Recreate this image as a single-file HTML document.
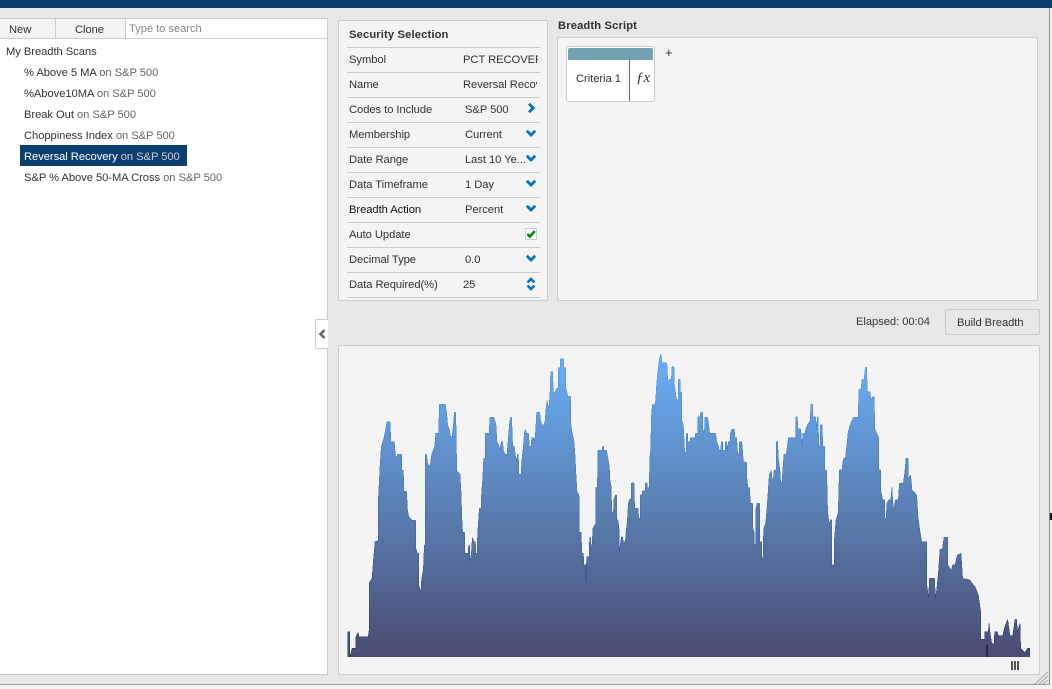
<!DOCTYPE html>
<html><head><meta charset="utf-8"><style>
*{box-sizing:border-box}
html,body{margin:0;padding:0}
body{width:1052px;height:689px;overflow:hidden;position:relative;background:#e8e8e8;font:11.2px "Liberation Sans",sans-serif;color:#333;letter-spacing:-.05px}
.a{position:absolute}
.t{position:absolute;white-space:nowrap;line-height:14px;margin-top:1px}
.t span{color:#666}
.b{font-weight:bold;letter-spacing:.14px}
.l{position:absolute;left:347px;width:193px;height:1px;background:#ccc}
.v{position:absolute;white-space:nowrap;overflow:hidden;line-height:14px;margin-top:1px}
svg.c{position:absolute;left:526px;width:10px;height:10px}
svg.c path{fill:none;stroke:#0a73b8;stroke-width:2.8}
</style></head><body>
<div class="a" style="left:0;top:0;width:1052px;height:8px;background:#0a3f70"></div>
<div class="a" style="left:1049px;top:8px;width:1px;height:677px;background:#888"></div>
<div class="a" style="left:1050px;top:8px;width:2px;height:681px;background:#f4f4f4"></div>
<div class="a" style="left:0;top:684px;width:1050px;height:1px;background:#999"></div>
<div class="a" style="left:0;top:685px;width:1052px;height:4px;background:#f4f4f4"></div>
<div class="a" style="left:1050px;top:513px;width:2px;height:7px;background:#113"></div>

<!-- left panel -->
<div class="a" style="left:0;top:18px;width:328px;height:657px;background:#fff;border:1px solid #ccc;border-left:0"></div>
<div class="a" style="left:0;top:19px;width:55px;height:20px;background:#f4f4f4;border-bottom:1px solid #ccc"></div>
<div class="a" style="left:55px;top:19px;width:71px;height:20px;background:#f4f4f4;border:1px solid #ccc;border-top:0"></div>
<div class="a" style="left:126px;top:38px;width:201px;height:1px;background:#ccc"></div>
<div class="t" style="left:9px;top:22px">New</div>
<div class="t" style="left:75px;top:22px">Clone</div>
<div class="t" style="left:129px;top:21px;color:#8a8a8a">Type to search</div>
<div class="t" style="left:6px;top:44px">My Breadth Scans</div>
<div class="t" style="left:24px;top:65px">% Above 5 MA <span>on S&amp;P 500</span></div>
<div class="t" style="left:24px;top:86px">%Above10MA <span>on S&amp;P 500</span></div>
<div class="t" style="left:24px;top:107px">Break Out <span>on S&amp;P 500</span></div>
<div class="t" style="left:24px;top:128px">Choppiness Index <span>on S&amp;P 500</span></div>
<div class="a" style="left:20px;top:145px;width:167px;height:21px;background:#0a3f70"></div>
<div class="t" style="left:24px;top:149px;color:#fff">Reversal Recovery <span style="color:#ccd">on S&amp;P 500</span></div>
<div class="t" style="left:24px;top:170px">S&amp;P % Above 50-MA Cross <span>on S&amp;P 500</span></div>

<!-- collapse handle -->
<div class="a" style="left:315px;top:319px;width:13px;height:30px;background:#fff;border:1px solid #ccc;border-right:0;border-radius:2px 0 0 2px"></div>
<svg class="a" style="left:318px;top:329px" width="8" height="10" viewBox="0 0 8 10"><path d="M6.5 1 2.5 5l4 4" fill="none" stroke="#666" stroke-width="2.6"/></svg>

<!-- security selection -->
<div class="a" style="left:338px;top:20px;width:210px;height:281px;background:#f4f4f4;border:1px solid #ccc;border-radius:2px"></div>
<div class="t b" style="left:349px;top:27px">Security Selection</div>
<div class="l" style="top:47px"></div><div class="l" style="top:72px"></div><div class="l" style="top:97px"></div><div class="l" style="top:122px"></div><div class="l" style="top:147px"></div><div class="l" style="top:172px"></div><div class="l" style="top:197px"></div><div class="l" style="top:222px"></div><div class="l" style="top:247px"></div><div class="l" style="top:272px"></div><div class="l" style="top:297px"></div>
<div class="t" style="left:349px;top:52px">Symbol</div>
<div class="t" style="left:349px;top:77px">Name</div>
<div class="t" style="left:349px;top:102px">Codes to Include</div>
<div class="t" style="left:349px;top:127px">Membership</div>
<div class="t" style="left:349px;top:152px">Date Range</div>
<div class="t" style="left:349px;top:177px">Data Timeframe</div>
<div class="t" style="left:349px;top:202px;color:#111">Breadth Action</div>
<div class="t" style="left:349px;top:227px">Auto Update</div>
<div class="t" style="left:349px;top:252px">Decimal Type</div>
<div class="t" style="left:349px;top:277px">Data Required(%)</div>
<div class="v" style="left:463px;top:52px;width:75px">PCT RECOVERY</div>
<div class="v" style="left:463px;top:77px;width:74px">Reversal Recovery</div>
<div class="t" style="left:465px;top:102px">S&amp;P 500</div>
<div class="t" style="left:465px;top:127px">Current</div>
<div class="t" style="left:465px;top:152px">Last 10 Ye...</div>
<div class="t" style="left:465px;top:177px">1 Day</div>
<div class="t" style="left:465px;top:202px">Percent</div>
<div class="t" style="left:465px;top:252px">0.0</div>
<div class="t" style="left:463px;top:277px">25</div>
<svg class="c" style="top:103px" viewBox="0 0 10 10"><path d="M3 .8 7.2 5 3 9.2"/></svg>
<svg class="c" style="top:128px" viewBox="0 0 10 10"><path d="M.8 2.8 5 7 9.2 2.8"/></svg>
<svg class="c" style="top:153px" viewBox="0 0 10 10"><path d="M.8 2.8 5 7 9.2 2.8"/></svg>
<svg class="c" style="top:178px" viewBox="0 0 10 10"><path d="M.8 2.8 5 7 9.2 2.8"/></svg>
<svg class="c" style="top:203px" viewBox="0 0 10 10"><path d="M.8 2.8 5 7 9.2 2.8"/></svg>
<svg class="c" style="top:253px" viewBox="0 0 10 10"><path d="M.8 2.8 5 7 9.2 2.8"/></svg>
<svg class="a" style="left:526px;top:277px" width="10" height="14" viewBox="0 0 10 14"><path d="M1.5 5.5 5 2l3.5 3.5M1.5 8.5 5 12l3.5-3.5" fill="none" stroke="#0a73b8" stroke-width="2.6"/></svg>
<svg class="a" style="left:525px;top:228px" width="12" height="12" viewBox="0 0 12 12"><rect x=".5" y=".5" width="11" height="11" fill="#fff" stroke="#ccc"/><path d="M2.3 6l2.6 2.6L9.8 3" fill="none" stroke="#0a8a12" stroke-width="2.6"/></svg>

<!-- breadth script -->
<div class="t b" style="left:558px;top:18px">Breadth Script</div>
<div class="a" style="left:557px;top:37px;width:481px;height:264px;background:#f4f4f4;border:1px solid #ccc;border-radius:2px"></div>
<div class="a" style="left:566px;top:46px;width:89px;height:56px;background:#fff;border:1px solid #ccc;border-radius:3px"></div>
<div class="a" style="left:568px;top:48px;width:85px;height:12px;background:#74a2b3;border-radius:2px 2px 0 0"></div>
<div class="a" style="left:629px;top:60px;width:1px;height:41px;background:#666"></div>
<div class="t" style="left:576px;top:71px">Criteria 1</div>
<div class="t" style="left:636px;top:69px;font:italic 15px 'Liberation Serif',serif;line-height:16px;letter-spacing:0">&#402;x</div>
<div class="t" style="left:665px;top:45px;font-size:13px">+</div>

<!-- elapsed + button -->
<div class="t" style="left:856px;top:314px">Elapsed: 00:04</div>
<div class="a" style="left:945px;top:309px;width:95px;height:26px;background:#e8e8e8;border:1px solid #ccc;border-radius:2px"></div>
<div class="t" style="left:957px;top:315px">Build Breadth</div>

<!-- chart panel -->
<div class="a" style="left:338px;top:345px;width:702px;height:330px;background:#f4f4f4;border:1px solid #ccc;border-radius:2px"></div>
<svg class="a" style="left:0;top:0" width="1052" height="689" viewBox="0 0 1052 689" shape-rendering="crispEdges">
<defs>
<linearGradient id="f1" gradientUnits="userSpaceOnUse" x1="0" y1="30" x2="0" y2="936"><stop offset="0" stop-color="#6ab0f8"/><stop offset=".5" stop-color="#5a80b4"/><stop offset="1" stop-color="#4a4c72"/></linearGradient>
<linearGradient id="s1" gradientUnits="userSpaceOnUse" x1="0" y1="30" x2="0" y2="936"><stop offset="0" stop-color="#4a94e8"/><stop offset=".5" stop-color="#3a6cb0"/><stop offset="1" stop-color="#25306a"/></linearGradient>
<linearGradient id="f2" gradientUnits="userSpaceOnUse" x1="0" y1="165" x2="0" y2="1071"><stop offset="0" stop-color="#6ab0f8"/><stop offset=".5" stop-color="#5a80b4"/><stop offset="1" stop-color="#4a4c72"/></linearGradient>
<linearGradient id="s2" gradientUnits="userSpaceOnUse" x1="0" y1="165" x2="0" y2="1071"><stop offset="0" stop-color="#4a94e8"/><stop offset=".5" stop-color="#3a6cb0"/><stop offset="1" stop-color="#25306a"/></linearGradient>
<clipPath id="c1"><rect x="340" y="345" width="260" height="312"/></clipPath>
<clipPath id="c2"><rect x="600" y="345" width="230" height="312"/></clipPath>
<clipPath id="c3"><rect x="830" y="345" width="201" height="312"/></clipPath>
</defs>
<g clip-path="url(#c1)"><g transform="translate(340,345) scale(.33333)">
<polygon fill="url(#f1)" stroke="url(#s1)" stroke-width="1.5" points="24,945 24,860 30,860 30,935 36,910 48,910 48,875 54,862 57,875 84,875 87,862 88,712 96,700 100,650 105,590 114,588 115,462 120,364 124,304 132,278 141,230 150,230 153,290 163,290 166,330 170,338 172,328 185,328 186,376 190,376 192,438 200,440 202,490 206,514 216,526 227,526 228,612 232,625 236,625 237,722 242,745 245,700 250,675 253,600 256,600 256,328 260,328 262,352 268,365 272,352 275,328 284,304 287,265 296,265 298,178 316,178 320,202 323,240 328,254 332,276 336,276 340,240 343,202 347,202 349,276 350,376 360,388 363,438 366,526 368,562 374,562 375,625 384,625 386,600 389,602 390,650 394,625 397,577 402,590 406,590 408,625 411,625 413,562 418,490 423,490 425,438 428,402 431,340 435,340 436,265 447,265 450,217 462,217 468,240 471,290 477,302 480,315 484,290 488,290 490,315 495,328 501,328 505,278 508,240 511,217 515,217 518,304 523,304 526,330 530,350 532,328 535,328 537,388 543,388 546,340 550,304 553,265 556,253 560,265 566,265 568,304 573,304 575,278 581,278 584,290 587,253 590,202 599,202 602,228 606,240 612,240 615,228 618,190 621,166 627,190 630,142 632,80 638,80 640,142 645,142 650,130 654,130 655,68 660,68 661,42 671,42 672,68 677,68 678,130 684,154 692,154 693,240 697,265 702,290 705,328 708,388 711,440 717,450 718,562 724,562 725,625 730,625 732,660 738,660 738,710 740,636 747,636 749,577 752,577 753,600 757,600 758,550 765,538 767,540 768,428 772,425 774,316 790,316 790,945"/>
</g></g>
<g clip-path="url(#c2)"><g transform="translate(590,345) scale(.33333)">
<polygon fill="url(#f1)" stroke="url(#s1)" stroke-width="1.5" points="20,945 20,316 36,316 38,304 42,304 42,316 50,316 54,340 58,364 60,404 64,428 65,502 70,502 72,462 76,450 80,450 81,525 84,525 88,560 88,620 92,590 94,576 98,576 100,590 106,590 108,562 112,526 115,474 120,462 123,462 124,414 132,414 134,490 144,490 146,514 150,525 151,450 156,450 157,438 165,438 166,414 171,414 172,428 178,428 179,340 182,316 184,216 187,178 192,178 194,190 197,165 199,130 202,92 205,70 208,42 211,30 214,30 216,54 229,54 232,66 233,110 238,103 244,103 246,66 252,66 253,115 256,140 260,165 264,165 265,103 270,103 271,142 275,142 276,228 280,240 284,320 288,325 289,265 293,265 294,290 300,290 301,278 315,278 316,265 323,265 324,216 330,216 332,202 338,202 339,253 343,265 345,217 353,217 356,240 359,265 377,265 380,290 385,304 388,316 392,316 394,290 398,290 399,316 405,316 406,290 410,290 412,316 415,290 420,290 421,265 425,253 433,253 435,278 440,278 443,326 447,326 448,290 455,290 457,304 460,350 470,352 471,402 474,428 479,428 481,475 488,475 489,550 492,560 493,598 497,598 498,490 501,475 509,475 510,590 515,590 516,645 519,635 521,550 526,538 529,514 532,475 535,428 538,388 544,376 546,402 550,402 552,376 558,376 559,290 563,290 565,340 570,376 572,412 576,412 579,366 582,328 588,328 592,304 595,278 617,278 618,216 622,216 624,252 632,252 636,300 639,265 645,265 647,253 652,240 660,228 663,178 668,178 669,216 677,216 680,252 682,216 685,216 686,312 690,300 691,240 697,240 698,304 704,304 705,376 710,376 713,500 716,525 720,535 730,535 730,945"/>
</g></g>
<g clip-path="url(#c3)"><g transform="translate(820,300) scale(.33333)">
<polygon fill="url(#f2)" stroke="url(#s2)" stroke-width="1.5" points="20,1080 20,660 35,660 36,795 42,795 43,720 48,660 54,640 56,590 58,510 66,510 70,475 76,475 80,440 84,400 90,375 100,352 115,352 116,270 123,265 126,238 132,238 136,202 140,202 142,276 150,276 153,300 158,290 163,290 164,385 170,400 176,412 177,510 182,510 183,575 188,600 194,600 195,655 199,655 200,610 206,600 212,600 216,562 218,600 221,630 226,600 235,600 238,550 250,550 255,510 258,475 264,475 265,535 272,525 276,570 290,585 294,650 300,695 305,725 320,725 321,860 326,895 328,835 344,835 346,895 350,870 355,820 360,748 367,748 372,712 383,712 384,795 394,810 398,795 405,795 412,765 423,760 428,835 450,840 455,848 465,860 475,885 482,935 483,1018 494,1018 494,996 505,996 507,970 510,996 515,1030 522,1032 524,996 532,996 535,1008 548,1008 553,985 563,958 570,1008 578,1008 585,958 590,958 592,996 600,970 602,1045 615,1058 622,1045 630,1045 630,1080"/>
</g></g>
<path d="M986 645h2v12h-2z" fill="#1d2a62"/>
<path d="M1011 661h2v9h-2zM1014 661h2v9h-2zM1017 661h2v9h-2z" fill="#555"/>
</svg>
<svg class="a" style="left:1034px;top:671px" width="15" height="14" viewBox="0 0 15 14"><path d="M1 13 14 1M5 13l9-8M9 13l5-4" stroke="#aaa" fill="none"/></svg>
</body></html>
